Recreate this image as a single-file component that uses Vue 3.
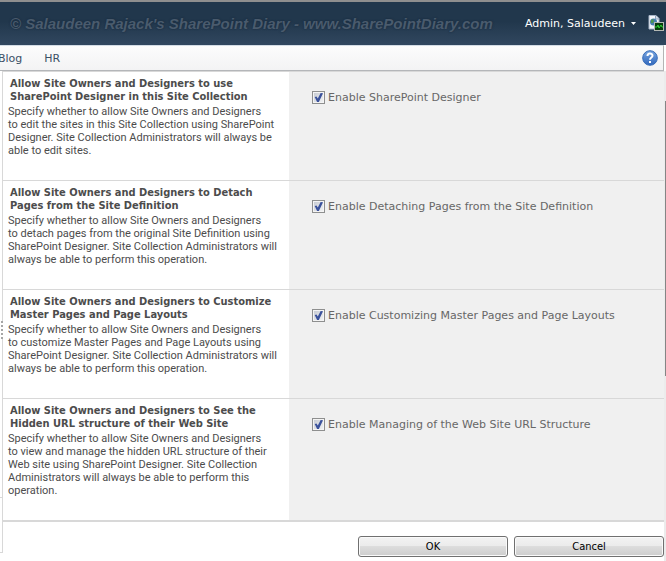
<template>
  <div class="page">
    <header class="ribbon">
      <span class="watermark">© Salaudeen Rajack's SharePoint Diary - www.SharePointDiary.com</span>
      <button type="button" class="user-menu">
        Admin, Salaudeen
        <svg class="arrow" width="5" height="3" viewBox="0 0 5 3"><path d="M0 0h5L2.5 3z" fill="#fff" /></svg>
      </button>
      <svg class="dashboard-icon" width="16" height="17" viewBox="0 0 16 17">
        <path d="M1 .5h7l3 3V14H1z" fill="#f4f7fb" stroke="#a9b7c9" />
        <path d="M7.500 .5v3.500H11" fill="#d5dfeb" stroke="#8fa3bc" />
        <circle cx="5.500" cy="7" r="3.500" fill="#477fae" />
        <path d="M3 5l2-1 1 2-1 2-2 0zM6 8l2-1v2l-2 1z" fill="#4b9553" />
        <rect x="6.500" y="7.500" width="9" height="8" fill="#073c0b" stroke="#b4b8b4" />
        <path d="M7 12h2l1-2 1 3 2-3 1 2h1" fill="none" stroke="#2ed336" />
      </svg>
    </header>

    <nav class="top-nav">
      <a href="#" class="first">Blog</a>
      <a href="#">HR</a>
      <button type="button" class="help" aria-label="Help">
        <svg width="16" height="16" viewBox="0 0 16 16">
          <defs>
            <linearGradient id="help-fill" x1="0" y1="0" x2="0" y2="1">
              <stop offset="0" stop-color="#78a5df" />
              <stop offset="1" stop-color="#3168bd" />
            </linearGradient>
          </defs>
          <circle cx="8" cy="8" r="7.300" fill="url(#help-fill)" stroke="#376cb8" />
          <path d="M5.500 6C5.500 2.700 10.500 2.900 10.500 5.700C10.500 7.500 8 7.600 8 9.800" fill="none" stroke="#fff" stroke-width="2" />
          <rect x="7" y="11" width="2" height="2" fill="#fff" />
        </svg>
      </button>
    </nav>

    <div class="body">
      <aside class="side">
        <div class="side-upper">
          <div class="grip"><i v-for="n in 5" :key="n"></i></div>
        </div>
        <div class="side-lower"></div>
      </aside>

      <form class="settings" @submit.prevent>
        <section v-for="item in settings" :key="item.id" class="row">
          <div class="info">
            <h3>{{ item.title }}</h3>
            <p>{{ item.description }}</p>
          </div>
          <div class="control">
            <input :id="item.id" v-model="item.enabled" type="checkbox" />
            <label :for="item.id">{{ item.label }}</label>
          </div>
        </section>
        <div class="actions">
          <button type="submit">OK</button>
          <button type="button">Cancel</button>
        </div>
      </form>

      <div class="scroll"><div class="thumb"></div></div>
    </div>
  </div>
</template>

<script setup>
import { ref } from 'vue';

const settings = ref([
  {
    id: 'enable-designer',
    title: 'Allow Site Owners and Designers to use\nSharePoint Designer in this Site Collection',
    description: 'Specify whether to allow Site Owners and Designers\nto edit the sites in this Site Collection using SharePoint\nDesigner. Site Collection Administrators will always be\nable to edit sites.',
    label: 'Enable SharePoint Designer',
    enabled: true
  },
  {
    id: 'enable-detaching',
    title: 'Allow Site Owners and Designers to Detach\nPages from the Site Definition',
    description: 'Specify whether to allow Site Owners and Designers\nto detach pages from the original Site Definition using\nSharePoint Designer. Site Collection Administrators will\nalways be able to perform this operation.',
    label: 'Enable Detaching Pages from the Site Definition',
    enabled: true
  },
  {
    id: 'enable-customizing',
    title: 'Allow Site Owners and Designers to Customize\nMaster Pages and Page Layouts',
    description: 'Specify whether to allow Site Owners and Designers\nto customize Master Pages and Page Layouts using\nSharePoint Designer. Site Collection Administrators will\nalways be able to perform this operation.',
    label: 'Enable Customizing Master Pages and Page Layouts',
    enabled: true
  },
  {
    id: 'enable-url-structure',
    title: 'Allow Site Owners and Designers to See the\nHidden URL structure of their Web Site',
    description: 'Specify whether to allow Site Owners and Designers\nto view and manage the hidden URL structure of their\nWeb site using SharePoint Designer. Site Collection\nAdministrators will always be able to perform this\noperation.',
    label: 'Enable Managing of the Web Site URL Structure',
    enabled: true
  }
]);
</script>

<style>
body {
  margin: 0;
  background: #fff;
}
</style>

<style scoped>
.page {
  font-family: Verdana, 'DejaVu Sans', sans-serif;
  font-size: 11px;
  overflow: hidden;
}

.ribbon {
  display: flex;
  align-items: center;
  box-sizing: border-box;
  height: 45px;
  padding: 0 2px 0 10px;
  border-top: 2px solid #8f8f8f;
  background: linear-gradient(#21374c 0%, #21374c 45%, #31475f 100%);
}

.watermark {
  flex: 1;
  font: italic bold 15px 'Liberation Sans', Arial, sans-serif;
  color: #4a5b6d;
  text-shadow: 0 0 2px #14263a;
  white-space: nowrap;
}

.user-menu {
  display: flex;
  align-items: center;
  gap: 6px;
  margin-right: 12px;
  padding: 0;
  border: 0;
  background: none;
  font: inherit;
  color: #fff;
  white-space: nowrap;
}

.dashboard-icon {
  flex: none;
}

.top-nav {
  display: flex;
  align-items: center;
  box-sizing: border-box;
  height: 26px;
  margin-right: 2px;
  padding-right: 5px;
  border-top: 1px solid #d3dce5;
  border-right: 1px solid #b4b4b4;
  border-bottom: 1px solid #b4b6b9;
  background: linear-gradient(#fcfcfc, #f3f3f4);
}

.top-nav a {
  margin-right: 22px;
  color: #3b4f65;
  text-decoration: none;
}

.top-nav .first {
  margin-left: -2px;
}

.help {
  display: flex;
  margin-left: auto;
  padding: 0;
  border: 0;
  background: none;
}

.body {
  display: flex;
}

.side {
  flex: none;
  display: flex;
  flex-direction: column;
  width: 3px;
  margin-bottom: 9px;
}

.side-upper {
  flex: 1;
  display: flex;
  flex-direction: column;
  justify-content: center;
  padding-top: 92px;
  border-right: 1px solid #d8d8d8;
  border-bottom: 1px solid #d8d8d8;
}

.side-lower {
  height: 54px;
  border-right: 1px solid #d8d8d8;
  border-bottom: 1px solid #d8d8d8;
}

.grip {
  display: flex;
  flex-direction: column;
  gap: 2px;
  padding-left: 1px;
  margin-right: -1px;
  background: #fff;
}

.grip i {
  height: 2px;
  background: #a6a6a6;
}

.settings {
  flex: 1;
  min-width: 0;
  border-top: 1px solid #d8d8d8;
}

.row {
  display: flex;
  border-bottom: 1px solid #d8d8d8;
}

.row:nth-last-child(2) {
  border-bottom-width: 2px;
}

.info {
  flex: none;
  box-sizing: border-box;
  width: 286px;
  padding: 5px 0 23px 5px;
  font-family: Tahoma, 'DejaVu Sans Condensed', 'DejaVu Sans', sans-serif;
  line-height: 13px;
  white-space: pre;
  color: #4c4c4c;
}

.info h3 {
  margin: 0 0 2px 2px;
  font-size: 11px;
  font-weight: bold;
}

.info p {
  margin: 0;
  font-family: Tahoma, Roboto, sans-serif;
}

.control {
  flex: 1;
  display: flex;
  align-items: flex-start;
  gap: 3px;
  padding: 19px 0 0 23px;
  background: #f0f0f0;
  color: #676767;
  line-height: 14px;
  white-space: nowrap;
}

.control input {
  appearance: none;
  display: grid;
  place-items: center;
  box-sizing: border-box;
  width: 13px;
  height: 13px;
  margin: 0;
  border: 1px solid #8e8f8f;
  background: linear-gradient(135deg, #c4c8d0, #f4f5f6);
  box-shadow: inset 0 0 0 1px #f4f4f4;
}

.control input:checked::after {
  content: '';
  width: 9px;
  height: 9px;
  background: #3b529c;
  clip-path: polygon(8% 45%, 28% 40%, 42% 62%, 74% 0, 100% 4%, 54% 100%, 34% 100%);
}

.actions {
  display: flex;
  justify-content: flex-end;
  gap: 6px;
  padding: 14px 0 5px 0;
}

.actions button {
  width: 150px;
  height: 21px;
  padding: 0;
  border: 1px solid #707070;
  border-radius: 3px;
  background: linear-gradient(#f3f3f3 0%, #ebebeb 50%, #dddddd 50%, #cdcdcd 100%);
  box-shadow: inset 0 0 0 1px #fafafa;
  font: 11px Tahoma, 'DejaVu Sans Condensed', 'DejaVu Sans', sans-serif;
  color: #000;
}

.scroll {
  flex: none;
  width: 2px;
  box-sizing: border-box;
  padding: 30px 0 0 1px;
  background: #ececec;
}

.thumb {
  height: 275px;
  background: #858585;
}
</style>
